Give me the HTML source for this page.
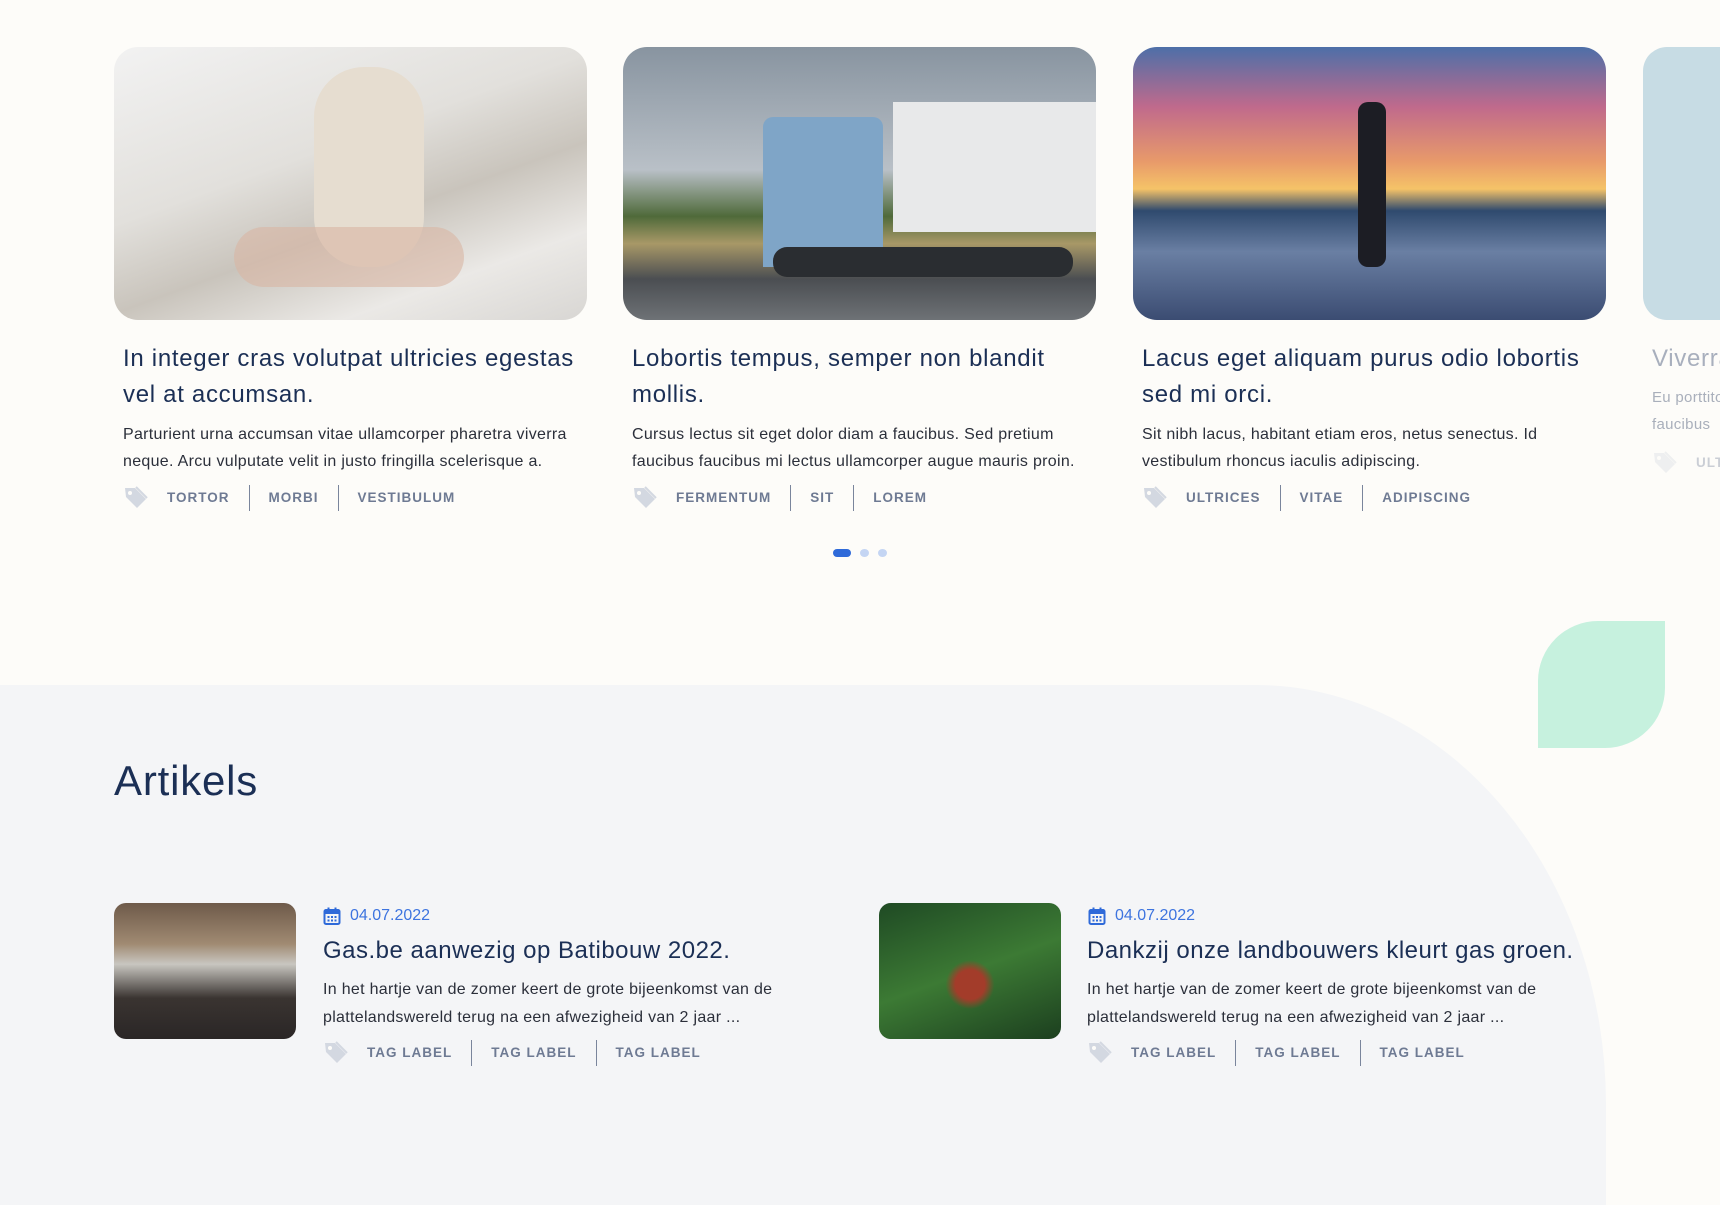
<!DOCTYPE html><html><head><meta charset="utf-8"><style>
*{margin:0;padding:0;box-sizing:border-box}
body{width:1720px;height:1164px;overflow:hidden;background:#fdfcf9;font-family:"Liberation Sans",sans-serif;position:relative}
.abs{position:absolute}
.img{position:absolute;top:47px;width:473px;height:273px;border-radius:24px;overflow:hidden}
.t{position:absolute;top:341px;width:475px;font-size:24px;line-height:36px;color:#1b2f55;letter-spacing:0.7px}
.p{position:absolute;top:421px;width:472px;font-size:16px;line-height:27px;color:#2b2f3a;letter-spacing:0.3px}
.tags{position:absolute;display:flex;align-items:center;font-size:13.5px;font-weight:bold;letter-spacing:1px;color:#6e7a93}
.tags span{padding:0 19px;border-left:1.5px solid #7a859c;line-height:26px}
.tags span.f{border:none;padding-left:18px}
.ic{width:26px;height:26px}
.gray{position:absolute;left:0;top:685px;width:1606px;height:520px;background:#f4f5f7;border-top-right-radius:350px 420px}
</style></head><body>
<svg width="0" height="0" style="position:absolute"><defs><symbol id="tag" viewBox="0 0 26 26"><path d="M2 3h10l11 11-9 9L3 12z" fill="#d3d8e1"/><path d="M13 2l11 11" stroke="#d3d8e1" stroke-width="2" fill="none"/><circle cx="7" cy="8" r="2" fill="#fdfcf9"/></symbol></defs></svg>

<div class="img" style="left:114px;background:linear-gradient(160deg,#f2f2f2 0%,#e2e0dc 40%,#c9c4bc 60%,#ebe9e6 80%,#d8d6d3 100%)"><div class="abs" style="left:200px;top:20px;width:110px;height:200px;border-radius:50px;background:#e6ddd0"></div><div class="abs" style="left:120px;top:180px;width:230px;height:60px;border-radius:30px;background:#d9b6a4;opacity:.6"></div></div>
<div class="img" style="left:623px;background:linear-gradient(180deg,#8894a0 0%,#b9c0c7 45%,#4f6a3a 62%,#a89867 72%,#4b4e52 85%,#6e7276 100%)"><div class="abs" style="left:140px;top:70px;width:120px;height:150px;background:#7fa5c7;border-radius:10px 10px 0 0"></div><div class="abs" style="left:270px;top:55px;width:210px;height:130px;background:#e8e9ea"></div><div class="abs" style="left:150px;top:200px;width:300px;height:30px;background:#2a2d31;border-radius:14px"></div></div>
<div class="img" style="left:1133px;background:linear-gradient(180deg,#4d6fa8 0%,#c06a8c 22%,#e89a6a 42%,#f5c368 52%,#2f4a6e 60%,#6a7fa3 75%,#3b4c72 100%)"><div class="abs" style="left:225px;top:55px;width:28px;height:165px;background:#1c1d24;border-radius:10px"></div></div>
<div class="img" style="left:1643px;background:#c7dce4"></div>

<div class="t" style="left:123px">In integer cras volutpat ultricies egestas vel at accumsan.</div>
<div class="t" style="left:632px">Lobortis tempus, semper non blandit mollis.</div>
<div class="t" style="left:1142px">Lacus eget aliquam purus odio lobortis sed mi orci.</div>
<div class="t" style="left:1652px;color:#a8afbd;white-space:nowrap">Viverra</div>
<div class="p" style="left:123px">Parturient urna accumsan vitae ullamcorper pharetra viverra neque. Arcu vulputate velit in justo fringilla scelerisque a.</div>
<div class="p" style="left:632px">Cursus lectus sit eget dolor diam a faucibus. Sed pretium faucibus faucibus mi lectus ullamcorper augue mauris proin.</div>
<div class="p" style="left:1142px">Sit nibh lacus, habitant etiam eros, netus senectus. Id vestibulum rhoncus iaculis adipiscing.</div>
<div class="p" style="left:1652px;top:384px;color:#a9afbb;font-size:15px;white-space:nowrap">Eu porttitor<br>faucibus</div>

<div class="tags" style="left:123px;top:485px"><svg class="ic"><use href="#tag"/></svg><span class="f">TORTOR</span><span>MORBI</span><span>VESTIBULUM</span></div>
<div class="tags" style="left:632px;top:485px"><svg class="ic"><use href="#tag"/></svg><span class="f">FERMENTUM</span><span>SIT</span><span>LOREM</span></div>
<div class="tags" style="left:1142px;top:485px"><svg class="ic"><use href="#tag"/></svg><span class="f">ULTRICES</span><span>VITAE</span><span>ADIPISCING</span></div>
<div class="tags" style="left:1652px;top:450px;opacity:.35"><svg class="ic"><use href="#tag"/></svg><span class="f">ULT</span></div>

<div class="abs" style="left:833px;top:549px;width:18px;height:8px;border-radius:4px;background:#2f6ad9"></div>
<div class="abs" style="left:860px;top:549px;width:9px;height:8px;border-radius:50%;background:#c4d5f3"></div>
<div class="abs" style="left:878px;top:549px;width:9px;height:8px;border-radius:50%;background:#c4d5f3"></div>

<div class="gray"></div>
<div class="abs" style="left:1538px;top:621px;width:127px;height:127px;background:#c6f1de;border-radius:60px 0 60px 0"></div>

<div class="abs" style="left:114px;top:757px;font-size:42px;color:#1b2f55;letter-spacing:0.8px">Artikels</div>

<div class="abs" style="left:114px;top:903px;width:182px;height:136px;border-radius:12px;background:linear-gradient(180deg,#6e5a4a 0%,#a08a72 30%,#c8c6c0 45%,#3a3431 70%,#2a2626 100%)"></div>
<div class="abs" style="left:879px;top:903px;width:182px;height:136px;border-radius:12px;background:radial-gradient(circle at 50% 60%,#a33c2a 0 12%,transparent 20%),linear-gradient(160deg,#1f4a24,#3c7a34 50%,#1c3f1f)"></div>

<div class="abs" style="left:323px;top:907px;font-size:16px;color:#3d74df;display:flex;align-items:center;gap:9px"><svg width="18" height="18" viewBox="0 0 18 18"><rect x="1.5" y="3" width="15" height="14" rx="1.5" fill="none" stroke="#2f6ad9" stroke-width="2"/><rect x="1.5" y="3" width="15" height="4" fill="#2f6ad9"/><rect x="4.5" y="0.5" width="2" height="4" fill="#2f6ad9"/><rect x="11.5" y="0.5" width="2" height="4" fill="#2f6ad9"/><g fill="#2f6ad9"><rect x="4.5" y="9" width="2" height="2"/><rect x="8" y="9" width="2" height="2"/><rect x="11.5" y="9" width="2" height="2"/><rect x="4.5" y="12.5" width="2" height="2"/><rect x="8" y="12.5" width="2" height="2"/><rect x="11.5" y="12.5" width="2" height="2"/></g></svg>04.07.2022</div>
<div class="abs" style="left:1088px;top:907px;font-size:16px;color:#3d74df;display:flex;align-items:center;gap:9px"><svg width="18" height="18" viewBox="0 0 18 18"><rect x="1.5" y="3" width="15" height="14" rx="1.5" fill="none" stroke="#2f6ad9" stroke-width="2"/><rect x="1.5" y="3" width="15" height="4" fill="#2f6ad9"/><rect x="4.5" y="0.5" width="2" height="4" fill="#2f6ad9"/><rect x="11.5" y="0.5" width="2" height="4" fill="#2f6ad9"/><g fill="#2f6ad9"><rect x="4.5" y="9" width="2" height="2"/><rect x="8" y="9" width="2" height="2"/><rect x="11.5" y="9" width="2" height="2"/><rect x="4.5" y="12.5" width="2" height="2"/><rect x="8" y="12.5" width="2" height="2"/><rect x="11.5" y="12.5" width="2" height="2"/></g></svg>04.07.2022</div>

<div class="abs" style="left:323px;top:937px;font-size:24px;color:#1b2f55;white-space:nowrap;letter-spacing:0.5px">Gas.be aanwezig op Batibouw 2022.</div>
<div class="abs" style="left:1087px;top:937px;font-size:24px;color:#1b2f55;white-space:nowrap;letter-spacing:0.5px">Dankzij onze landbouwers kleurt gas groen.</div>
<div class="abs" style="left:323px;top:976px;width:490px;font-size:16px;line-height:28px;color:#2b2f3a;letter-spacing:0.3px">In het hartje van de zomer keert de grote bijeenkomst van de plattelandswereld terug na een afwezigheid van 2 jaar ...</div>
<div class="abs" style="left:1087px;top:976px;width:490px;font-size:16px;line-height:28px;color:#2b2f3a;letter-spacing:0.3px">In het hartje van de zomer keert de grote bijeenkomst van de plattelandswereld terug na een afwezigheid van 2 jaar ...</div>
<div class="tags" style="left:323px;top:1040px"><svg class="ic"><use href="#tag"/></svg><span class="f">TAG LABEL</span><span>TAG LABEL</span><span>TAG LABEL</span></div>
<div class="tags" style="left:1087px;top:1040px"><svg class="ic"><use href="#tag"/></svg><span class="f">TAG LABEL</span><span>TAG LABEL</span><span>TAG LABEL</span></div>
</body></html>
